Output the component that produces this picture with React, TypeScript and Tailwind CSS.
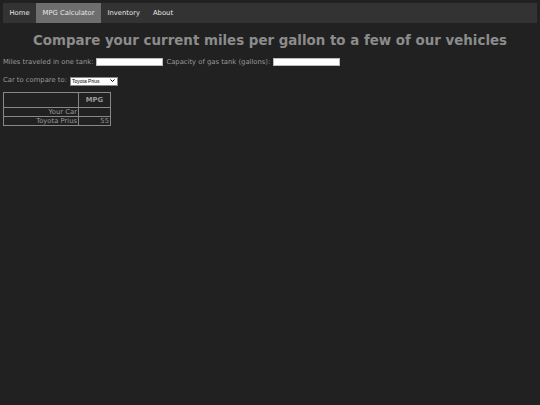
export default function App() {
  const navItems = ['Home', 'MPG Calculator', 'Inventory', 'About'];
  return (
    <div
      className="min-h-[405px] bg-[#212121] p-[3px] text-[6.8px] text-[#999999]"
      style={{ fontFamily: '"DejaVu Sans", Verdana, sans-serif' }}
    >
      {/* nav */}
      <nav className="flex h-[20px] bg-[#333333]">
        {navItems.map(item => (
          <div
            key={item}
            className={
              'flex items-center px-[6.5px] text-[#e6e6e6] ' +
              (item === 'MPG Calculator' ? 'bg-[#6e6e6e]' : '')
            }
          >
            {item}
          </div>
        ))}
      </nav>

      <h1 className="mt-[10px] text-center text-[13.4px] font-bold leading-[16px] text-[#8c8c8c]">
        Compare your current miles per gallon to a few of our vehicles
      </h1>

      <div className="mt-[9px] flex h-[8px] items-center gap-[3px]">
        <span>Miles traveled in one tank:</span>
        <input type="text" className="h-[8px] w-[67px] border border-[#bbb] bg-white" />
        <span>Capacity of gas tank (gallons):</span>
        <input type="text" className="h-[8px] w-[67px] border border-[#bbb] bg-white" />
      </div>

      <div className="mt-[10px] flex h-[9px] items-center gap-[3px]">
        <span>Car to compare to:</span>
        <div className="relative h-[9px] w-[48px]">
          <select
            className="h-[9px] w-[48px] appearance-none border border-[#888] bg-white pl-[1px] text-[5px] leading-[7px] text-black"
            style={{ fontFamily: '"Liberation Sans", Arial, sans-serif' }}
          >
            <option>Toyota Prius</option>
          </select>
          <svg
            className="pointer-events-none absolute right-[3px] top-[3px]"
            width="5"
            height="3"
            viewBox="0 0 5 3"
          >
            <path d="M0.5 0.5 L2.5 2.5 L4.5 0.5" stroke="#000" strokeWidth="1" fill="none" />
          </svg>
        </div>
      </div>

      <table className="mt-[7px] border-collapse border border-[#888] text-right">
        <tbody>
          <tr className="h-[15px]">
            <th className="w-[75px] border border-[#888]"></th>
            <th className="w-[32px] border border-[#888] text-center font-bold">MPG</th>
          </tr>
          <tr className="h-[9px] leading-[8px]">
            <td className="border border-[#888] px-[1px]">Your Car</td>
            <td className="border border-[#888] px-[1px]"></td>
          </tr>
          <tr className="h-[9px] leading-[8px]">
            <td className="border border-[#888] px-[1px]">Toyota Prius</td>
            <td className="border border-[#888] px-[1px]">55</td>
          </tr>
        </tbody>
      </table>
    </div>
  );
}
